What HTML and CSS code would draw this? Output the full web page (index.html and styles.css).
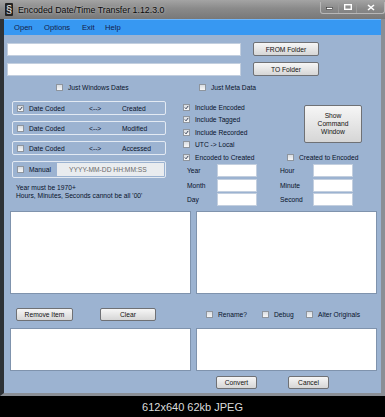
FILE: index.html
```html
<!DOCTYPE html>
<html lang="en">
<head>
  <meta charset="UTF-8">
  <title>Encoded Date/Time Transfer</title>
  <link rel="stylesheet" href="styles.css">
</head>
<body>

<div class="window">
  <div class="titlebar">
    <span class="app-icon">§</span>
    <span class="title">Encoded Date/Time Transfer 1.12.3.0</span>
    <div class="caption-buttons">
      <span class="cap-btn"><svg width="7" height="5" viewBox="0 0 7 5"><rect x="0.5" y="2.5" width="6" height="2" fill="#fff" stroke="#333" stroke-width="0.6"/></svg></span>
      <span class="cap-btn"><svg width="8" height="6" viewBox="0 0 8 6"><rect x="0.7" y="0.7" width="6.6" height="4.6" fill="none" stroke="#fff" stroke-width="1.4"/></svg></span>
      <span class="cap-btn close"><svg width="8" height="7" viewBox="0 0 8 7"><path d="M1 1 L7 6 M7 1 L1 6" stroke="#fff" stroke-width="1.6"/></svg></span>
    </div>
  </div>

  <div class="frame">
    <div class="menubar">
      <span class="menu-item m-open">Open</span>
      <span class="menu-item m-options">Options</span>
      <span class="menu-item m-exit">Exit</span>
      <span class="menu-item">Help</span>
    </div>

    <div class="client">
      <div class="path-row">
        <div class="textbox path"></div>
        <div class="btn folder">FROM Folder</div>
      </div>
      <div class="path-row second">
        <div class="textbox path"></div>
        <div class="btn folder">TO Folder</div>
      </div>

      <div class="scope-row">
        <label class="check just-win"><span class="cb"></span>Just Windows Dates</label>
        <label class="check"><span class="cb"></span>Just Meta Data</label>
      </div>

      <div class="options">
        <div class="links">
          <div class="link">
            <span class="cb"><svg viewBox="0 0 7 7"><path d="M1.2 3.5 L2.9 5.3 L5.9 1.3"/></svg></span>
            <span class="link-from">Date Coded</span>
            <span class="link-arrow">&lt;--&gt;</span>
            <span>Created</span>
          </div>
          <div class="link">
            <span class="cb"></span>
            <span class="link-from">Date Coded</span>
            <span class="link-arrow">&lt;--&gt;</span>
            <span>Modified</span>
          </div>
          <div class="link">
            <span class="cb"></span>
            <span class="link-from">Date Coded</span>
            <span class="link-arrow">&lt;--&gt;</span>
            <span>Accessed</span>
          </div>
          <div class="link manual">
            <span class="cb"></span>
            <span class="manual-label">Manual</span>
            <span class="manual-field">YYYY-MM-DD HH:MM:SS</span>
          </div>
          <div class="notes">
            <div>Year must be 1970+</div>
            <div>Hours, Minutes, Seconds cannot be all '00'</div>
          </div>
        </div>

        <div class="includes">
          <div class="includes-top">
            <div class="include-list">
              <label class="check row"><span class="cb"><svg viewBox="0 0 7 7"><path d="M1.2 3.5 L2.9 5.3 L5.9 1.3"/></svg></span>Include Encoded</label>
              <label class="check row"><span class="cb"><svg viewBox="0 0 7 7"><path d="M1.2 3.5 L2.9 5.3 L5.9 1.3"/></svg></span>Include Tagged</label>
              <label class="check row"><span class="cb"><svg viewBox="0 0 7 7"><path d="M1.2 3.5 L2.9 5.3 L5.9 1.3"/></svg></span>Include Recorded</label>
              <label class="check row"><span class="cb"></span>UTC -&gt; Local</label>
            </div>
            <div class="btn command">Show<br>Command<br>Window</div>
          </div>
          <div class="direction-row">
            <label class="check row enc-created"><span class="cb"><svg viewBox="0 0 7 7"><path d="M1.2 3.5 L2.9 5.3 L5.9 1.3"/></svg></span>Encoded to Created</label>
            <label class="check row"><span class="cb"></span>Created to Encoded</label>
          </div>
          <div class="time-grid">
            <span class="time-label">Year</span><div class="textbox"></div>
            <span class="time-label second-col">Hour</span><div class="textbox"></div>
            <span class="time-label">Month</span><div class="textbox"></div>
            <span class="time-label second-col">Minute</span><div class="textbox"></div>
            <span class="time-label">Day</span><div class="textbox"></div>
            <span class="time-label second-col">Second</span><div class="textbox"></div>
          </div>
        </div>
      </div>

      <div class="lists">
        <div class="listbox"></div>
        <div class="listbox"></div>
      </div>

      <div class="item-row">
        <div class="btn remove">Remove Item</div>
        <div class="btn clear">Clear</div>
        <label class="check rename"><span class="cb"></span>Rename?</label>
        <label class="check debug"><span class="cb"></span>Debug</label>
        <label class="check"><span class="cb"></span>Alter Originals</label>
      </div>

      <div class="lists logs">
        <div class="listbox"></div>
        <div class="listbox"></div>
      </div>

      <div class="action-row">
        <div class="btn action">Convert</div>
        <div class="btn action">Cancel</div>
      </div>
    </div>
  </div>
</div>

<div class="caption">612x640 62kb JPEG</div>

</body>
</html>
```

FILE: styles.css
```css
* {
  box-sizing: border-box;
}

body {
  margin: 0;
  width: 385px;
  height: 417px;
  overflow: hidden;
  background: #000;
  font-family: "Liberation Sans", Arial, sans-serif;
  font-size: 6.7px;
  color: #08122a;
}

.window {
  width: 385px;
}

.titlebar {
  height: 19px;
  display: flex;
  align-items: center;
  padding-left: 5px;
  background: linear-gradient(#a4a4a4, #8a8a8a 45%, #787878);
}

.app-icon {
  width: 8px;
  height: 13px;
  background: #222;
  color: #eee;
  font-size: 11px;
  line-height: 13px;
  text-align: center;
  border-radius: 1px;
}

.title {
  margin-left: 5px;
  font-size: 8.8px;
  color: #0a0a0a;
  text-shadow: 0 0 3px #c8c8c8;
}

.caption-buttons {
  margin-left: auto;
  margin-top: -4px;
  display: flex;
  height: 12px;
  border: 1px solid #b8b8b8;
  border-top: 0;
  border-radius: 0 0 3px 3px;
}

.cap-btn {
  width: 18px;
  display: flex;
  align-items: center;
  justify-content: center;
  border-right: 1px solid #9a9a9a;
}

.cap-btn.close {
  width: 27px;
  border-right: 0;
}

.frame {
  border-left: 4px solid #2e3236;
  border-right: 4px solid #8a8f96;
  border-bottom: 3px solid #8a8f96;
}

.menubar {
  height: 16px;
  display: flex;
  align-items: center;
  padding-left: 10px;
  background: #3798f2;
  border-top: 1px solid #6fb6fb;
  font-size: 7.6px;
  color: #12204a;
}

.m-open { width: 30px; }
.m-options { width: 38px; }
.m-exit { width: 23px; }

.client {
  height: 358px;
  padding: 7px 0 0 3px;
  background: #9cb3d1;
}

.textbox {
  background: #fff;
  border: 1px solid #c3cfdf;
  height: 13px;
}

.path-row {
  display: flex;
  align-items: center;
  gap: 12px;
  height: 14px;
}

.path-row.second {
  margin-top: 6px;
}

.path {
  width: 234px;
}

.btn {
  display: flex;
  align-items: center;
  justify-content: center;
  text-align: center;
  background: linear-gradient(#f6f6f6, #e6e6e6 50%, #d6d6d6);
  border: 1px solid #6f7175;
  border-radius: 2px;
  color: #111;
}

.folder {
  width: 66px;
  height: 14px;
}

.check {
  display: flex;
  align-items: center;
  white-space: nowrap;
}

.cb {
  width: 7px;
  height: 7px;
  flex: none;
  margin-right: 5px;
  border: 1px solid #8e959e;
  background: linear-gradient(#d9dde2, #f7f7f7);
  display: flex;
}

.cb svg {
  width: 100%;
  height: 100%;
  overflow: visible;
}

.cb svg path {
  fill: none;
  stroke: #1a2540;
  stroke-width: 1.2;
}

.scope-row {
  display: flex;
  margin-top: 7px;
  height: 9px;
  padding-left: 49px;
}

.just-win {
  width: 143px;
}

.options {
  display: flex;
  margin-top: 9px;
  height: 105px;
}

.links {
  width: 154px;
  margin-left: 5px;
}

.link {
  height: 14px;
  margin-bottom: 6px;
  display: flex;
  align-items: center;
  padding-left: 4px;
  border: 1px solid #e3eaf3;
  border-radius: 2px;
}

.link-from {
  width: 60px;
}

.link-arrow {
  width: 33px;
}

.link.manual {
  height: 17px;
  margin-top: 2px;
  margin-bottom: 0;
  padding-right: 1px;
}

.manual-label {
  width: 28px;
}

.manual-field {
  flex: 1;
  align-self: stretch;
  margin: 1px 0;
  padding-left: 12px;
  display: flex;
  align-items: center;
  background: #e9ecef;
  color: #6a6a6a;
}

.notes {
  margin-top: 6px;
  padding-left: 4px;
  line-height: 7.5px;
}

.includes {
  margin-left: 17px;
  width: 179px;
}

.includes-top {
  display: flex;
  height: 50px;
}

.include-list {
  width: 121px;
}

.row {
  height: 12.5px;
}

.command {
  width: 58px;
  height: 38px;
  margin-top: 4px;
  line-height: 8px;
}

.direction-row {
  display: flex;
}

.enc-created {
  width: 104px;
}

.time-grid {
  display: grid;
  grid-template-columns: 30px 40px 56px 40px;
  grid-auto-rows: 13px;
  row-gap: 1.5px;
  padding-left: 4px;
  margin-top: 0.5px;
}

.time-label {
  display: flex;
  align-items: center;
}

.time-label.second-col {
  padding-left: 23px;
}

.lists {
  display: flex;
  gap: 5px;
  margin-left: 3px;
  margin-top: 5px;
  height: 83px;
}

.listbox {
  width: 181px;
  background: #fff;
  border: 1px solid #7f93ad;
}

.item-row {
  display: flex;
  align-items: center;
  margin-top: 14px;
  height: 13px;
  padding-left: 9px;
}

.remove {
  width: 57px;
  height: 13px;
}

.clear {
  width: 56px;
  height: 13px;
  margin-left: 27px;
  margin-right: 50px;
}

.rename {
  width: 56px;
}

.debug {
  width: 44px;
}

.lists.logs {
  margin-top: 7px;
  height: 43px;
}

.action-row {
  display: flex;
  gap: 31px;
  margin-top: 5px;
  padding-left: 209px;
}

.action {
  width: 41px;
  height: 13px;
}

.caption {
  height: 21px;
  display: flex;
  align-items: center;
  justify-content: center;
  font-size: 11px;
  color: #dcdcdc;
}
```
